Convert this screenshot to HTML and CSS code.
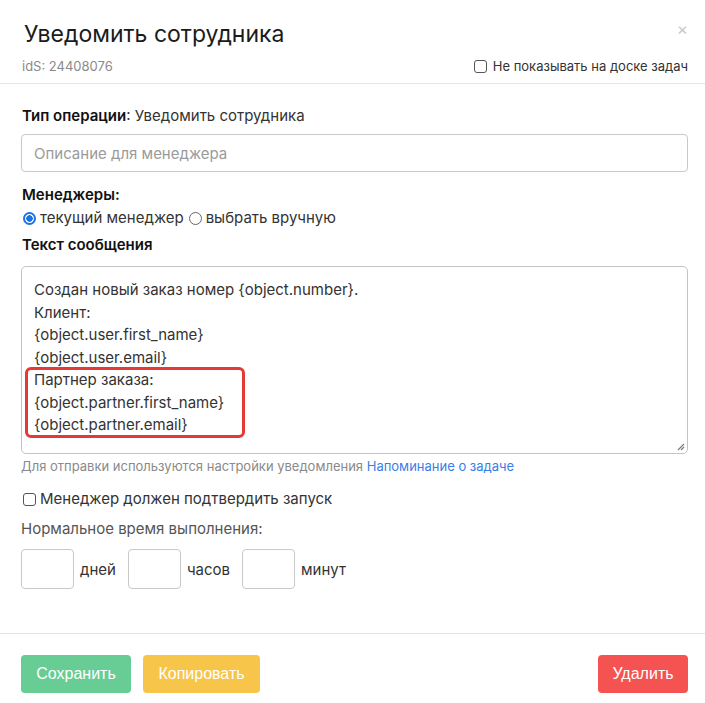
FILE: index.html
```html
<!DOCTYPE html>
<html lang="ru">
<head>
<meta charset="utf-8">
<link rel="stylesheet" href="styles.css">
</head>
<body>
<div class="modal">
  <div class="header">
    <div class="title-row">
      <h1 class="title">Уведомить сотрудника</h1>
      <span class="close">×</span>
    </div>
    <div class="sub-row">
      <span class="ids">idS: 24408076</span>
      <label class="check"><span class="cbox"></span>Не показывать на доске задач</label>
    </div>
  </div>
  <div class="body">
    <div class="op"><b>Тип операции</b>: Уведомить сотрудника</div>
    <div class="input desc">Описание для менеджера</div>
    <div class="label mgr">Менеджеры:</div>
    <div class="radios">
      <span class="radio on"></span><span>текущий менеджер</span>
      <span class="radio"></span><span>выбрать вручную</span>
    </div>
    <div class="label msg">Текст сообщения</div>
    <div class="textarea">
      <div class="line">Создан новый заказ номер {object.number}.</div>
      <div class="line">Клиент:</div>
      <div class="line">{object.user.first_name}</div>
      <div class="line">{object.user.email}</div>
      <div class="line">Партнер заказа:</div>
      <div class="line">{object.partner.first_name}</div>
      <div class="line">{object.partner.email}</div>
      <div class="highlight"></div>
      <svg class="grip" width="10" height="10" viewBox="0 0 10 10"><path d="M9 3 L3 9 M9 6 L6 9" stroke="#777" stroke-width="1.1" fill="none"/></svg>
    </div>
    <div class="hint">Для отправки используются настройки уведомления <a class="link">Напоминание о задаче</a></div>
    <label class="check big"><span class="cbox"></span>Менеджер должен подтвердить запуск</label>
    <div class="norm">Нормальное время выполнения:</div>
    <div class="times">
      <span class="tbox"></span><span class="unit">дней</span>
      <span class="tbox"></span><span class="unit">часов</span>
      <span class="tbox"></span><span class="unit">минут</span>
    </div>
  </div>
  <div class="footer">
    <button class="btn green">Сохранить</button>
    <button class="btn yellow">Копировать</button>
    <span class="spacer"></span>
    <button class="btn red">Удалить</button>
  </div>
</div>
</body>
</html>
```
FILE: styles.css
```css
* { box-sizing: border-box; }
html, body { margin: 0; padding: 0; background: #fff; }
body { font-family: Inter, "Noto Sans", sans-serif; color: #333; width: 705px; height: 703px; overflow: hidden; }
.modal { width: 705px; height: 703px; display: flex; flex-direction: column; }
.header { padding: 18px 17px 0 22px; border-bottom: 1px solid #e5e5e5; height: 84px; }
.title-row { display: flex; justify-content: space-between; align-items: flex-start; }
.title { margin: 0 0 0 2px; font-size: 23px; font-weight: 400; color: #1b1b1b; line-height: 32px; }
.close { color: #c8c8c8; font-size: 17px; line-height: 20px; margin-top: 1px; }
.sub-row { display: flex; justify-content: space-between; align-items: center; margin-top: 8px; }
.ids { font-size: 13px; color: #8a8a8a; }
.check { display: flex; align-items: center; font-size: 13px; color: #333; }
.cbox { width: 13px; height: 13px; border: 1px solid #555; border-radius: 3px; margin-right: 6px; display: inline-block; }
.body { flex: 1; padding: 22px 17px 0 21px; }
.op { font-size: 15px; color: #333; line-height: 20px; margin-left: 1px; }
.op b { font-weight: 600; color: #111; }
.input { border: 1px solid #c9c9c9; border-radius: 4px; height: 38px; margin-top: 8px; display: flex; align-items: center; padding-left: 12px; font-size: 15px; color: #9a9a9a; }
.label { font-size: 15px; font-weight: 600; color: #111; line-height: 20px; margin-left: 1px; }
.mgr { margin-top: 13px; }
.radios { display: flex; align-items: center; font-size: 15px; line-height: 22px; color: #333; margin-top: 2px; }
.radio { width: 13px; height: 13px; border: 1px solid #666; border-radius: 50%; margin: 0 4px 0 2px; display: inline-block; }
.radio.on { border: 2px solid #1a73e8; background: radial-gradient(circle, #1a73e8 0 3px, #fff 3.5px); }
.radios span:nth-child(3) { margin-left: 5px; }
.msg { margin-top: 6px; }
.textarea { position: relative; border: 1px solid #c4c4c8; border-radius: 5px; height: 188px; margin-top: 11px; padding: 12px 12px; font-size: 15px; line-height: 22.5px; color: #333; }
.highlight { position: absolute; left: 3px; top: 100px; width: 220px; height: 71px; border: 3px solid #e53935; border-radius: 6px; }
.grip { position: absolute; right: 2px; bottom: 2px; }
.hint { font-size: 13px; color: #8a8a8a; margin-top: 4px; line-height: 17px; }
.link { color: #3a7ee6; }
.check.big { font-size: 15px; margin-top: 14px; line-height: 20px; }
.check.big .cbox { margin-left: 2px; margin-right: 4px; }
.norm { font-size: 15px; color: #555; margin-top: 10px; line-height: 20px; }
.times { display: flex; align-items: center; margin-top: 10px; }
.tbox { width: 53px; height: 40px; border: 1px solid #c9c9c9; border-radius: 4px; display: inline-block; }
.unit { font-size: 15px; color: #333; margin: 0 12px 0 6px; }
.footer { height: 70px; border-top: 1px solid #e5e5e5; display: flex; align-items: flex-start; padding: 21px 17px 0 21px; gap: 12px; }
.spacer { flex: 1; }
.btn { font-family: "Liberation Sans", Arial, sans-serif; font-size: 16px; color: #fff; border: none; border-radius: 4px; height: 38px; padding: 0 13px; }
.green { background: #68cc95; width: 110px; }
.yellow { background: #f7c54a; width: 117px; }
.red { background: #f55252; width: 90px; }
```
